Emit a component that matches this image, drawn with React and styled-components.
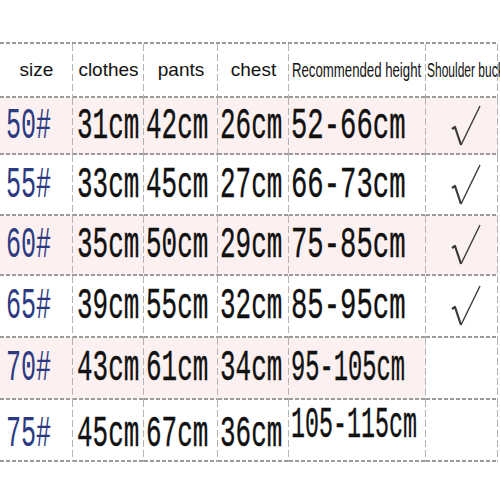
import React from "react";
import styled, { createGlobalStyle } from "styled-components";

const Global = createGlobalStyle`
  html, body { margin: 0; padding: 0; background: #fff; overflow: hidden; }
  body { width: 500px; height: 500px; }
`;

const COLS = [73, 71, 74, 71, 137, 72];
const PINK = "#fcf0f0";

const Page = styled.div`
  padding-top: 42px;
  width: 500px;
`;

const Table = styled.div`
  width: 498px;
  background-image: repeating-linear-gradient(90deg, #9c9c9c 0 4px, transparent 4px 6px);
  background-size: 100% 2px;
  background-repeat: no-repeat;
  background-position: top left;
  padding-top: 2px;
`;

const Row = styled.div`
  display: flex;
  height: ${(p) => p.$h}px;
`;

const Cell = styled.div`
  box-sizing: border-box;
  flex: 0 0 ${(p) => p.$w}px;
  width: ${(p) => p.$w}px;
  display: flex;
  align-items: center;
  justify-content: ${(p) => (p.$center ? "center" : "flex-start")};
  padding-left: ${(p) => p.$pad || 0}px;
  padding-bottom: 2px;
  background-color: ${(p) => (p.$pink ? PINK : "#fff")};
  background-image:
    repeating-linear-gradient(180deg, #b4b4b4 0 7px, transparent 7px 10px),
    repeating-linear-gradient(90deg, #9c9c9c 0 4px, transparent 4px 6px);
  background-size: 1px 100%, 100% 2px;
  background-position: right top, left bottom;
  background-repeat: no-repeat;
  overflow: visible;
  white-space: nowrap;
`;

const HeadText = styled.span`
  font-family: "Liberation Sans", Arial, sans-serif;
  font-size: 19px;
  color: #111;
`;

const NarrowHead = styled.span`
  display: inline-block;
  font-family: "Liberation Sans", Arial, sans-serif;
  font-size: 20px;
  color: #111;
  transform: scaleX(${(p) => p.$sx || 0.66});
  transform-origin: 0 50%;
  white-space: nowrap;
`;

const Value = styled.span`
  display: inline-block;
  font-family: "Liberation Mono", "DejaVu Sans Mono", monospace;
  font-size: 44px;
  line-height: 1;
  color: ${(p) => (p.$blue ? "#2c3a82" : "#111")};
  -webkit-text-stroke: ${(p) => (p.$blue ? "0" : "0.4px #111")};
  transform: translateY(${(p) => p.$dy || 0}px) scaleX(${(p) => p.$sx || 0.59});
  transform-origin: 0 50%;
  white-space: nowrap;
`;

const Check = () => (
  <svg width="30" height="42" viewBox="0 0 30 42" style={{ marginLeft: 25 }}>
    <path d="M1 24 L4 22 L10 40" fill="none" stroke="#3a3a3a" strokeWidth="2.2" strokeLinejoin="round" />
    <path d="M10 40 L29 1" fill="none" stroke="#3a3a3a" strokeWidth="1.4" />
  </svg>
);

const rows = [
  { size: "50#", v: ["31cm", "42cm", "26cm", "52-66cm"], check: true, pink: true, spink: true, h: 57 },
  { size: "55#", v: ["33cm", "45cm", "27cm", "66-73cm"], check: true, h: 61 },
  { size: "60#", v: ["35cm", "50cm", "29cm", "75-85cm"], check: true, pink: true, spink: true, h: 60 },
  { size: "65#", v: ["39cm", "55cm", "32cm", "85-95cm"], check: true, h: 62 },
  { size: "70#", v: ["43cm", "61cm", "34cm", "95-105cm"], pink: true, h: 62, rsx: 0.54 },
  { size: "75#", v: ["45cm", "67cm", "36cm", "105-115cm"], h: 62, rsx: 0.53, rdy: -5, dy: 4 },
];

export default function App() {
  return (
    <>
      <Global />
      <Page>
        <Table>
          <Row $h={54}>
            <Cell $w={COLS[0]} $center><HeadText>size</HeadText></Cell>
            <Cell $w={COLS[1]} $center><HeadText>clothes</HeadText></Cell>
            <Cell $w={COLS[2]} $center><HeadText>pants</HeadText></Cell>
            <Cell $w={COLS[3]} $center><HeadText>chest</HeadText></Cell>
            <Cell $w={COLS[4]} $pad={3}><NarrowHead>Recommended height</NarrowHead></Cell>
            <Cell $w={COLS[5]} $pad={1}><NarrowHead $sx={0.6}>Shoulder buckle</NarrowHead></Cell>
          </Row>
          {rows.map((r) => (
            <Row key={r.size} $h={r.h}>
              <Cell $w={COLS[0]} $pad={6} $pink={r.pink}>
                <Value $blue $sx={0.57} $dy={r.dy}>{r.size}</Value>
              </Cell>
              {r.v.slice(0, 3).map((t, i) => (
                <Cell key={t + i} $w={COLS[i + 1]} $pad={i === 0 ? 4 : 2} $pink={r.pink}>
                  <Value $dy={r.dy}>{t}</Value>
                </Cell>
              ))}
              <Cell $w={COLS[4]} $pad={2} $pink={r.pink}>
                <Value $sx={r.rsx || 0.62} $dy={r.rdy}>{r.v[3]}</Value>
              </Cell>
              <Cell $w={COLS[5]} $pink={r.spink}>
                {r.check ? <Check /> : null}
              </Cell>
            </Row>
          ))}
        </Table>
      </Page>
    </>
  );
}
